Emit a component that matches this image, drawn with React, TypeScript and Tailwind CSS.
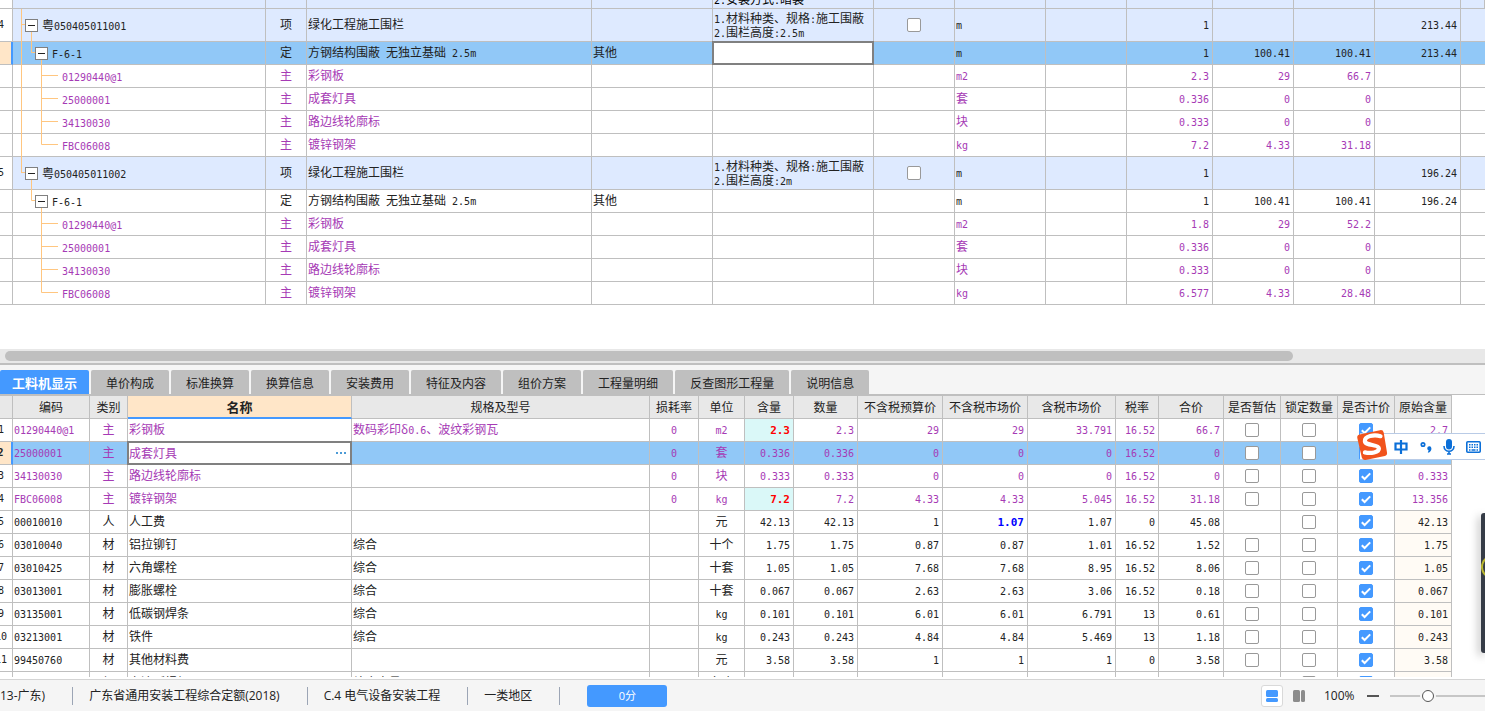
import { Fragment, useState } from 'react';
import type { ReactNode } from 'react';
import clsx from 'clsx';

type QuotaKind = 'group' | 'quota' | 'item' | 'last';

interface QuotaRow {
  no?: string;
  kind: QuotaKind;
  trunk: 'full' | 'half' | 'none';
  code: string;
  type: string;
  name: string;
  category?: string;
  features?: string[];
  unit: string;
  values: string[];
  selected?: boolean;
}

interface MaterialRow {
  code: string;
  type: string;
  name: string;
  spec?: string;
  loss?: string;
  unit: string;
  values: string[];
  original: string;
  main?: boolean;
  changed?: boolean;
  marketChanged?: boolean;
  noEstimate?: boolean;
  selected?: boolean;
}

const quotaRows: QuotaRow[] = [
  { no: '4', kind: 'group', trunk: 'full', code: '粤050405011001', type: '项', name: '绿化工程施工围栏', features: ['1.材料种类、规格:施工围蔽', '2.围栏高度:2.5m'], unit: 'm', values: ['1', '', '', '213.44'] },
  { kind: 'quota', trunk: 'full', code: 'F-6-1', type: '定', name: '方钢结构围蔽 无独立基础 2.5m', category: '其他', unit: 'm', values: ['1', '100.41', '100.41', '213.44'], selected: true },
  { kind: 'item', trunk: 'full', code: '01290440@1', type: '主', name: '彩钢板', unit: 'm2', values: ['2.3', '29', '66.7', ''] },
  { kind: 'item', trunk: 'full', code: '25000001', type: '主', name: '成套灯具', unit: '套', values: ['0.336', '0', '0', ''] },
  { kind: 'item', trunk: 'full', code: '34130030', type: '主', name: '路边线轮廓标', unit: '块', values: ['0.333', '0', '0', ''] },
  { kind: 'last', trunk: 'full', code: 'FBC06008', type: '主', name: '镀锌钢架', unit: 'kg', values: ['7.2', '4.33', '31.18', ''] },
  { no: '5', kind: 'group', trunk: 'half', code: '粤050405011002', type: '项', name: '绿化工程施工围栏', features: ['1.材料种类、规格:施工围蔽', '2.围栏高度:2m'], unit: 'm', values: ['1', '', '', '196.24'] },
  { kind: 'quota', trunk: 'none', code: 'F-6-1', type: '定', name: '方钢结构围蔽 无独立基础 2.5m', category: '其他', unit: 'm', values: ['1', '100.41', '100.41', '196.24'] },
  { kind: 'item', trunk: 'none', code: '01290440@1', type: '主', name: '彩钢板', unit: 'm2', values: ['1.8', '29', '52.2', ''] },
  { kind: 'item', trunk: 'none', code: '25000001', type: '主', name: '成套灯具', unit: '套', values: ['0.336', '0', '0', ''] },
  { kind: 'item', trunk: 'none', code: '34130030', type: '主', name: '路边线轮廓标', unit: '块', values: ['0.333', '0', '0', ''] },
  { kind: 'last', trunk: 'none', code: 'FBC06008', type: '主', name: '镀锌钢架', unit: 'kg', values: ['6.577', '4.33', '28.48', ''] },
];

// values: 含量, 数量, 不含税预算价, 不含税市场价, 含税市场价, 税率, 合价
const materialRows: MaterialRow[] = [
  { code: '01290440@1', type: '主', name: '彩钢板', spec: '数码彩印δ0.6、波纹彩钢瓦', loss: '0', unit: 'm2', values: ['2.3', '2.3', '29', '29', '33.791', '16.52', '66.7'], original: '2.7', main: true, changed: true },
  { code: '25000001', type: '主', name: '成套灯具', loss: '0', unit: '套', values: ['0.336', '0.336', '0', '0', '0', '16.52', '0'], original: '', main: true, selected: true },
  { code: '34130030', type: '主', name: '路边线轮廓标', loss: '0', unit: '块', values: ['0.333', '0.333', '0', '0', '0', '16.52', '0'], original: '0.333', main: true },
  { code: 'FBC06008', type: '主', name: '镀锌钢架', loss: '0', unit: 'kg', values: ['7.2', '7.2', '4.33', '4.33', '5.045', '16.52', '31.18'], original: '13.356', main: true, changed: true },
  { code: '00010010', type: '人', name: '人工费', unit: '元', values: ['42.13', '42.13', '1', '1.07', '1.07', '0', '45.08'], original: '42.13', marketChanged: true, noEstimate: true },
  { code: '03010040', type: '材', name: '铝拉铆钉', spec: '综合', unit: '十个', values: ['1.75', '1.75', '0.87', '0.87', '1.01', '16.52', '1.52'], original: '1.75' },
  { code: '03010425', type: '材', name: '六角螺栓', spec: '综合', unit: '十套', values: ['1.05', '1.05', '7.68', '7.68', '8.95', '16.52', '8.06'], original: '1.05' },
  { code: '03013001', type: '材', name: '膨胀螺栓', spec: '综合', unit: '十套', values: ['0.067', '0.067', '2.63', '2.63', '3.06', '16.52', '0.18'], original: '0.067' },
  { code: '03135001', type: '材', name: '低碳钢焊条', spec: '综合', unit: 'kg', values: ['0.101', '0.101', '6.01', '6.01', '6.791', '13', '0.61'], original: '0.101' },
  { code: '03213001', type: '材', name: '铁件', spec: '综合', unit: 'kg', values: ['0.243', '0.243', '4.84', '4.84', '5.469', '13', '1.18'], original: '0.243' },
  { code: '99450760', type: '材', name: '其他材料费', unit: '元', values: ['3.58', '3.58', '1', '1', '1', '0', '3.58'], original: '3.58' },
];

const tabs = ['工料机显示', '单价构成', '标准换算', '换算信息', '安装费用', '特征及内容', '组价方案', '工程量明细', '反查图形工程量', '说明信息'];

const materialHeads = ['编码', '类别', '名称', '规格及型号', '损耗率', '单位', '含量', '数量', '不含税预算价', '不含税市场价', '含税市场价', '税率', '合价', '是否暂估', '锁定数量', '是否计价', '原始含量'];

const cell = 'border-r border-b border-[#bfbfbf] p-0';
const textCell = 'border-r border-b border-[#bfbfbf] p-0 pb-0.5';

// Latin runs are set in the monospace face, Chinese runs keep the cell's own
function Text({ children }: { children: string }) {
  return (
    <>
      {children.split(/([\x20-\x7e]+)/).map((part, i) =>
        i % 2 ? (
          <span key={i} className="whitespace-pre font-['DejaVu_Sans_Mono',monospace] text-[10px] leading-none">{part}</span>
        ) : (
          <Fragment key={i}>{part}</Fragment>
        )
      )}
    </>
  );
}

function Tick({ label, checked = false }: { label: string; checked?: boolean }) {
  return (
    <span className="mx-auto grid h-3.5 w-3.5">
      <input
        type="checkbox"
        aria-label={label}
        defaultChecked={checked}
        className="peer col-start-1 row-start-1 h-3.5 w-3.5 appearance-none rounded-[2px] border border-[#999] bg-white checked:border-[#4499ff] checked:bg-[#4499ff]"
      />
      <svg viewBox="0 0 14 14" className="pointer-events-none invisible col-start-1 row-start-1 h-3.5 w-3.5 peer-checked:visible" fill="none" stroke="white" strokeWidth="2">
        <path d="M2.8 7.2 5.6 10 11.2 4.4" />
      </svg>
    </span>
  );
}

function RowNumber({ children, selected }: { children?: ReactNode; selected?: boolean }) {
  return (
    <td className={clsx('overflow-hidden border-b border-[#bfbfbf] p-0', selected ? 'border-r-2 border-r-[#4499ff] bg-[#ffe6c8] font-bold' : 'border-r bg-white')}>
      <div className="-ml-2.5 text-center font-['DejaVu_Sans_Mono',monospace] text-[10px] text-[#222]">{children}</div>
    </td>
  );
}

function CollapseButton({ label }: { label: string }) {
  return (
    <button aria-label={label} className="flex h-[13px] w-[13px] shrink-0 items-center justify-center border border-[#808080] bg-white">
      <span className="h-px w-[7px] bg-[#222]" />
    </button>
  );
}

function TreeLines({ kind, trunk }: { kind: QuotaKind; trunk: QuotaRow['trunk'] }) {
  const mid = kind === 'group' ? 16 : 11;
  const end = kind === 'group' ? 33 : 23;
  return (
    <svg width="48" height={end} className="col-start-1 row-start-1 overflow-visible" stroke="#ffc680" fill="none">
      {trunk !== 'none' && <path d={`M8.5 0V${trunk === 'full' ? end : mid}`} />}
      {kind === 'group' && <path d={`M8 ${mid - 0.5}H12M18.5 ${mid}V${end}`} />}
      {kind === 'quota' && <path d={`M18.5 0V${mid - 0.5}H22M28.5 ${mid}V${end}`} />}
      {kind === 'item' && <path d={`M28.5 0V${end}M28 ${mid - 0.5}H45`} />}
      {kind === 'last' && <path d={`M28.5 0V${mid - 0.5}H45`} />}
    </svg>
  );
}

function QuotaTable() {
  return (
    <table className="w-full table-fixed border-separate border-spacing-0">
      <colgroup>
        <col className="w-[13px]" />
        <col className="w-[253px]" />
        <col className="w-[41px]" />
        <col className="w-[285px]" />
        <col className="w-[121px]" />
        <col className="w-[161px]" />
        <col className="w-[81px]" />
        <col className="w-[91px]" />
        <col className="w-[81px]" />
        <col className="w-[86px]" />
        <col className="w-[81px]" />
        <col className="w-[81px]" />
        <col className="w-[86px]" />
        <col />
      </colgroup>
      <tbody>
        <tr className="bg-[#deeaff]">
          <RowNumber />
          {Array.from({ length: 13 }, (_, i) => (
            <td key={i} className={cell}>
              <div className="flex h-2 items-end overflow-hidden pb-0.5 pl-px">{i === 4 && <span><Text>2.安装方式:暗装</Text></span>}</div>
            </td>
          ))}
        </tr>
        {quotaRows.map((row, i) => {
          const group = row.kind === 'group';
          const leaf = row.kind === 'item' || row.kind === 'last';
          return (
            <tr
              key={i}
              className={clsx(group ? 'h-[33px] bg-[#deeaff]' : 'h-[23px]', row.selected && 'bg-[#91c8f7]', leaf ? 'text-[#a63ab5]' : 'text-[#222]')}
            >
              <RowNumber selected={row.selected}>{row.no}</RowNumber>
              <td className={cell}>
                <div className={clsx('grid', group ? 'h-8' : 'h-[22px]')}>
                  <TreeLines kind={row.kind} trunk={row.trunk} />
                  <div className={clsx('col-start-1 row-start-1 flex items-center', group && 'pl-3', row.kind === 'quota' && 'pl-[22px]', leaf && 'pl-[49px]')}>
                    {!leaf && <CollapseButton label={`折叠 ${row.code}`} />}
                    <span className={clsx('pb-0.5', !leaf && 'pl-1')}><Text>{row.code}</Text></span>
                  </div>
                </div>
              </td>
              <td className={clsx(textCell, 'text-center')}>{row.type}</td>
              <td className={clsx(textCell, 'pl-px')}><Text>{row.name}</Text></td>
              <td className={clsx(textCell, 'pl-px')}>{row.category}</td>
              <td className={cell}>
                {row.selected ? (
                  <input aria-label="项目特征" className="block h-[22px] w-full bg-white px-1 outline-2 -outline-offset-1 outline-[#808080]" />
                ) : (
                  row.features?.map((line) => <div key={line} className="h-3.5 whitespace-nowrap pl-px"><Text>{line}</Text></div>)
                )}
              </td>
              <td className={cell}>{group && <Tick label={`${row.code} 主要清单`} />}</td>
              <td className={clsx(textCell, 'pl-px')}><Text>{row.unit}</Text></td>
              <td className={cell} />
              {row.values.map((value, n) => (
                <td key={n} className={clsx(textCell, 'pr-[3px] text-right')}><Text>{value}</Text></td>
              ))}
              <td className="border-b border-[#bfbfbf] p-0" />
            </tr>
          );
        })}
      </tbody>
    </table>
  );
}

function MaterialTable() {
  return (
    <table className="w-[1452px] table-fixed border-separate border-spacing-0">
      <colgroup>
        <col className="w-[13px]" />
        <col className="w-[77px]" />
        <col className="w-[38px]" />
        <col className="w-[224px]" />
        <col className="w-[298px]" />
        <col className="w-[49px]" />
        <col className="w-[46px]" />
        <col className="w-[49px]" />
        <col className="w-[64px]" />
        <col className="w-[85px]" />
        <col className="w-[85px]" />
        <col className="w-[88px]" />
        <col className="w-[43px]" />
        <col className="w-[65px]" />
        <col className="w-[57px]" />
        <col className="w-[57px]" />
        <col className="w-[57px]" />
        <col className="w-[57px]" />
      </colgroup>
      <thead>
        <tr className="h-6 bg-[#e8e8e8] text-[#222]">
          <td className={clsx(cell, 'border-t')} />
          {materialHeads.map((head) => (
            <th
              key={head}
              className={clsx(
                'whitespace-nowrap border-t border-r border-[#bfbfbf] p-0',
                head === '名称' ? 'border-b-2 border-b-[#4499ff] bg-[#ffe6c8] text-[13px] font-bold' : 'border-b font-normal'
              )}
            >
              {head}
            </th>
          ))}
        </tr>
      </thead>
      <tbody>
        {materialRows.map((row, i) => (
          <tr key={row.code} className={clsx('h-[23px]', row.selected && 'bg-[#91c8f7]', row.main ? 'text-[#a63ab5]' : 'text-[#222]')}>
            <RowNumber selected={row.selected}>{i + 1}</RowNumber>
            <td className={clsx(textCell, 'pl-px')}><Text>{row.code}</Text></td>
            <td className={clsx(textCell, 'text-center')}>{row.type}</td>
            <td className={row.selected ? cell : clsx(textCell, 'pl-px')}>
              {row.selected ? (
                <div className="flex h-[22px] items-center bg-white pr-[5px] pl-px outline-2 -outline-offset-1 outline-[#808080]">
                  <input aria-label="名称" defaultValue={row.name} className="h-5 min-w-0 flex-1 pb-0.5 outline-none" />
                  <button aria-label="选择材料" className="flex gap-0.5">
                    <span className="h-0.5 w-0.5 bg-[#4c9bd6]" />
                    <span className="h-0.5 w-0.5 bg-[#4c9bd6]" />
                    <span className="h-0.5 w-0.5 bg-[#4c9bd6]" />
                  </button>
                </div>
              ) : (
                row.name
              )}
            </td>
            <td className={clsx(textCell, 'pl-px')}><Text>{row.spec ?? ''}</Text></td>
            <td className={clsx(textCell, 'text-center')}><Text>{row.loss ?? ''}</Text></td>
            <td className={clsx(textCell, 'text-center')}><Text>{row.unit}</Text></td>
            {row.values.map((value, n) => {
              const red = n === 0 && row.changed;
              const blue = n === 3 && row.marketChanged;
              return (
                <td key={n} className={clsx(textCell, 'pr-[3px] text-right', red && 'bg-[#daf8f8] text-[#ff0000]', blue && 'text-[#0000ff]')}>
                  {red || blue ? <b className="font-['DejaVu_Sans_Mono',monospace] text-[11px] leading-none">{value}</b> : <Text>{value}</Text>}
                </td>
              );
            })}
            <td className={cell}>{!row.noEstimate && <Tick label={`${row.name} 是否暂估`} />}</td>
            <td className={cell}><Tick label={`${row.name} 锁定数量`} /></td>
            <td className={cell}><Tick label={`${row.name} 是否计价`} checked /></td>
            <td className={clsx(textCell, 'pr-[3px] text-right', !row.main && 'bg-[#fffbf5]')}><Text>{row.original}</Text></td>
          </tr>
        ))}
        <tr className="h-[23px] text-[#222]">
          <RowNumber />
          <td className={clsx(cell, 'pl-0.5')}><CollapseButton label="折叠 机械" /></td>
          <td className={clsx(textCell, 'text-center')}>机</td>
          <td className={clsx(textCell, 'pl-px')}>交流弧焊机</td>
          <td className={clsx(textCell, 'pl-px')}>综合容量</td>
          <td className={cell} />
          <td className={clsx(textCell, 'text-center')}>台班</td>
          {Array.from({ length: 8 }, (_, i) => <td key={i} className={cell} />)}
          <td className={cell}><Tick label="机械 锁定数量" /></td>
          <td className={cell}><Tick label="机械 是否计价" checked /></td>
          <td className={clsx(cell, 'bg-[#fffbf5]')} />
        </tr>
      </tbody>
    </table>
  );
}

function InputMethodBar() {
  return (
    <div className="absolute top-[68px] right-0 flex h-[27px] items-center border-y border-[#b9cbe6] bg-white pr-1 text-[#0b6fd8]">
      <svg viewBox="0 0 32 32" className="-mt-1 mr-1.5 -ml-1 h-8 w-8">
        <path d="M3.5 5.5 24 1.2Q27 .6 27.7 3.5L31 23.5Q31.5 26.2 28.8 27L9.5 31Q6.5 31.5 5.8 28.6L1.3 9Q.8 6.2 3.5 5.5Z" fill="#f1531c" />
        <path d="M24.5 7.2C18 5.4 8.6 7 8.9 12c.3 5 13.6 3 14 7.4.3 4.2-8.5 5.3-14 4" fill="none" stroke="white" strokeWidth="4.2" strokeLinecap="round" />
      </svg>
      <button aria-label="中文输入">
        <svg viewBox="0 0 14 16" className="h-4 w-3.5" fill="none" stroke="currentColor" strokeWidth="2.2">
          <path d="M1.5 4.5H12.5V10.5H1.5ZM7 1V15" />
        </svg>
      </button>
      <button aria-label="中文标点" className="ml-3">
        <svg viewBox="0 0 12 16" className="h-4 w-3" fill="none" stroke="currentColor">
          <circle cx="3" cy="5.5" r="1.7" strokeWidth="1.7" />
          <path d="M9.2 7.3a2 2 0 0 0-.6 3.9L7.8 13.8C10.5 13.2 11.6 11.3 11.4 9.2A2 2 0 0 0 9.2 7.3Z" fill="currentColor" stroke="none" />
        </svg>
      </button>
      <button aria-label="语音输入" className="ml-[11px]">
        <svg viewBox="0 0 12 16" className="h-4 w-3" fill="none" stroke="currentColor" strokeWidth="1.6">
          <rect x="3" y="0" width="6" height="10.5" rx="3" fill="currentColor" stroke="none" />
          <path d="M1 7C1 14 11 14 11 7M6 12V15.5M4 15H8" />
        </svg>
      </button>
      <button aria-label="软键盘" className="ml-[11px]">
        <svg viewBox="0 0 15 12" className="h-3 w-[15px]" fill="none" stroke="currentColor">
          <rect x=".8" y=".8" width="13.4" height="10.4" rx="1" strokeWidth="1.6" />
          <path d="M3 3.7H12M3 6.2H12" strokeWidth="1.5" strokeDasharray="1.5 1" />
          <path d="M3 9H4.5M5.5 9H9.5M10.5 9H12" strokeWidth="1.3" />
        </svg>
      </button>
    </div>
  );
}

function StatusBar() {
  const item = 'flex h-[18px] items-center border-r border-[#9ca5b5] pr-[27px]';
  return (
    <footer className="flex h-8 shrink-0 items-center overflow-hidden whitespace-nowrap border-t border-[#d4d4d4] bg-[#f5f5f5] font-['Open_Sans','Noto_Sans_CJK_SC',sans-serif] text-[#222]">
      <span className={item}>13-广东)</span>
      <span className={clsx(item, 'pl-4')}>广东省通用安装工程综合定额(2018)</span>
      <span className={clsx(item, 'pl-4')}>C.4 电气设备安装工程</span>
      <span className={clsx(item, 'pl-4')}>一类地区</span>
      <button className="ml-[27px] h-[22px] w-20 rounded-[3px] bg-[#4499ff] text-[11px] text-white">0分</button>

      <div className="ml-auto flex items-center">
        <button aria-label="上下布局" className="flex h-[22px] w-[22px] items-center justify-center rounded-[3px] border border-[#d9d9d9] bg-white">
          <svg viewBox="0 0 12 12" className="h-3 w-3" fill="#4499ff">
            <rect width="12" height="7" rx="1.5" />
            <rect y="8" width="12" height="4" rx="1.5" />
          </svg>
        </button>
        <button aria-label="左右布局" className="ml-2.5">
          <svg viewBox="0 0 12 12" className="h-3 w-3" fill="#8c8c8c">
            <rect width="7" height="12" rx="1.5" />
            <rect x="8" width="4" height="12" rx="1.5" />
          </svg>
        </button>
        <label htmlFor="zoom" className="ml-[19px] w-8">100%</label>
        <button aria-label="缩小" className="ml-[11px] flex h-3 w-3 items-center">
          <span className="h-0.5 w-full bg-[#555]" />
        </button>
        <input
          id="zoom"
          type="range"
          min="0"
          max="100"
          defaultValue="38"
          className="ml-[11px] h-3.5 w-[95px] appearance-none bg-transparent [&::-webkit-slider-runnable-track]:h-0.5 [&::-webkit-slider-runnable-track]:bg-[#c6c6c6] [&::-webkit-slider-thumb]:-mt-[5px] [&::-webkit-slider-thumb]:h-3 [&::-webkit-slider-thumb]:w-3 [&::-webkit-slider-thumb]:appearance-none [&::-webkit-slider-thumb]:rounded-full [&::-webkit-slider-thumb]:border [&::-webkit-slider-thumb]:border-[#555] [&::-webkit-slider-thumb]:bg-white [&::-webkit-slider-thumb]:shadow-[0_0_0_2px_#f5f5f5]"
        />
      </div>
    </footer>
  );
}

export default function App() {
  const [active, setActive] = useState(tabs[0]);

  return (
    <div className="flex h-screen flex-col overflow-hidden bg-white font-['Noto_Sans_CJK_SC',sans-serif] text-[12px] leading-[14px]">
      <section className="shrink-0 pb-11">
        <QuotaTable />
      </section>

      <div className="shrink-0 border-b-2 border-[#bfbfbf] bg-[#e8e8e8] py-0.5 pl-[5px]">
        <div className="h-2.5 w-[87%] rounded-full bg-[#bfbfbf]" />
      </div>

      <section className="relative flex min-h-0 flex-1 flex-col">
        <div role="tablist" className="flex shrink-0 gap-0.5 border-b border-[#bfbfbf] bg-[#f5f5f5] pt-[5px]">
          {tabs.map((tab) => (
            <button
              key={tab}
              role="tab"
              aria-selected={tab === active}
              onClick={() => setActive(tab)}
              className={clsx(
                'h-6 rounded-t-[2px] pt-0.5 whitespace-nowrap',
                tab === active ? 'bg-[#4499ff] px-3 text-[13px] font-bold text-white' : 'bg-[#bfbfbf] px-[15px] text-[#222]'
              )}
            >
              {tab}
            </button>
          ))}
        </div>
        <div className="mb-0.5 min-h-0 flex-1 overflow-hidden">
          <MaterialTable />
        </div>
        <InputMethodBar />
        <div className="absolute right-0 bottom-[26px] flex h-[140px] w-1 items-center overflow-hidden rounded-l-[3px] bg-[#363c47] shadow-[-2px_3px_8px_rgba(0,0,0,0.35)]">
          <div className="-mt-8 h-6 w-6 shrink-0 rounded-full border-2 border-t-[#f0b41e] border-b-[#6cc24a] border-l-[#b9b52e]" />
        </div>
      </section>

      <StatusBar />
    </div>
  );
}
